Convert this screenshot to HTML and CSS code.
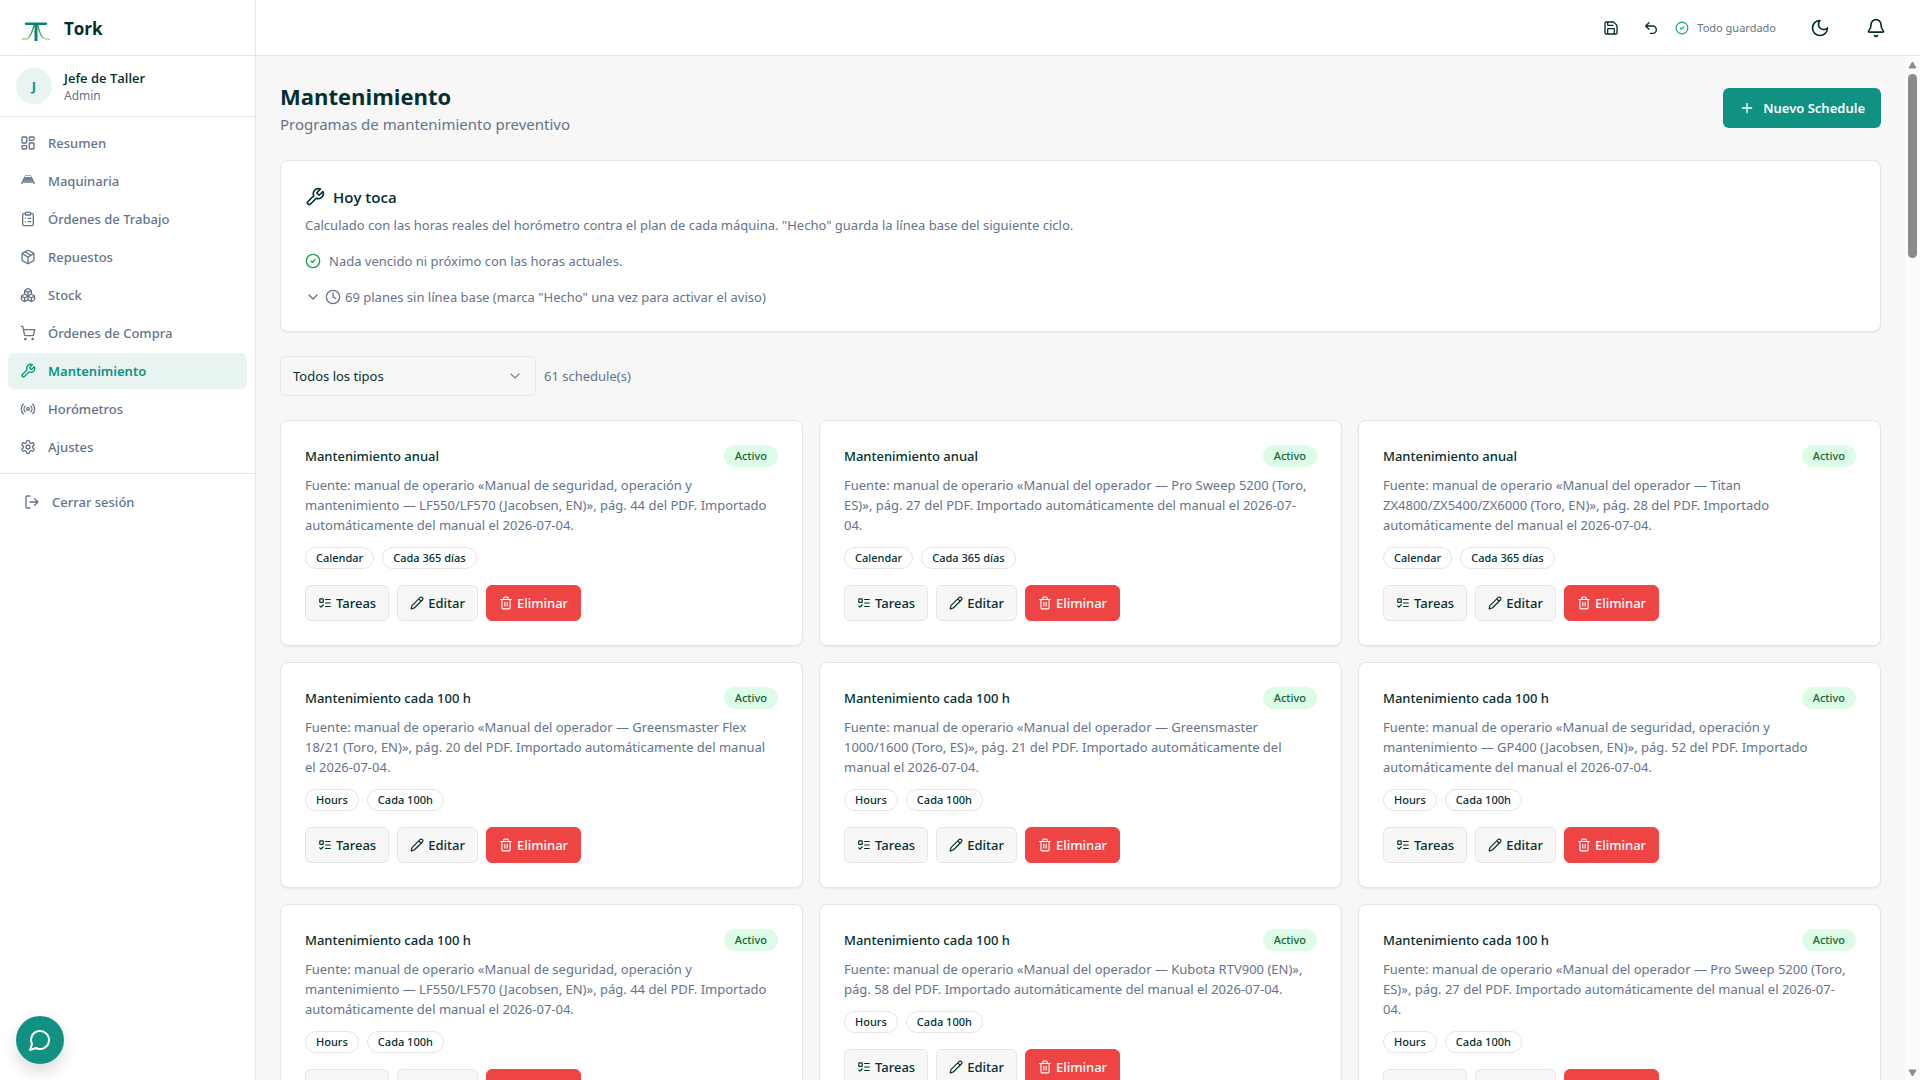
FILE: index.html
```html
<!DOCTYPE html>
<html lang="es">
<head>
<meta charset="utf-8">
<meta name="viewport" content="width=device-width, initial-scale=1">
<title>Tork – Mantenimiento</title>
<link rel="stylesheet" href="styles.css">
</head>
<body>
<svg class="sprite" aria-hidden="true">
  <symbol id="dashboard" viewBox="0 0 24 24"><rect x="3" y="3" width="7" height="9" rx="1"/><rect x="14" y="3" width="7" height="5" rx="1"/><rect x="14" y="12" width="7" height="9" rx="1"/><rect x="3" y="16" width="7" height="5" rx="1"/></symbol>
  <symbol id="machine" viewBox="0 0 16 16"><g stroke="none" fill="currentColor"><path d="M5 2h6v1H5z" opacity=".6"/><path d="M4 3h1v1H4zM11 3h1v1h-1z" opacity=".5"/><path d="M4 4h8v1h1v2H3V5h1z" opacity=".9"/><path d="M2 7h12v2H2z" opacity=".8"/><path d="M1 9h14v2h-2v-1H3v1H1z" opacity=".7"/></g></symbol>
  <symbol id="clipboard" viewBox="0 0 24 24"><rect x="8" y="2" width="8" height="4" rx="1"/><path d="M16 4h2a2 2 0 0 1 2 2v14a2 2 0 0 1-2 2H6a2 2 0 0 1-2-2V6a2 2 0 0 1 2-2h2M12 11h4M12 16h4M8 11h.01M8 16h.01"/></symbol>
  <symbol id="package" viewBox="0 0 24 24"><path d="M11 21.73a2 2 0 0 0 2 0l7-4A2 2 0 0 0 21 16V8a2 2 0 0 0-1-1.73l-7-4a2 2 0 0 0-2 0l-7 4A2 2 0 0 0 3 8v8a2 2 0 0 0 1 1.73zM12 22V12M3.29 7 12 12l8.71-5M7.5 4.27l9 5.15"/></symbol>
  <symbol id="boxes" viewBox="0 0 24 24"><path d="M2.97 12.92A2 2 0 0 0 2 14.63v3.24a2 2 0 0 0 .97 1.71l3 1.8a2 2 0 0 0 2.06 0L12 19v-5.5l-5-3-4.03 2.42ZM7 16.5l-4.74-2.85M7 16.5l5-3M7 16.5v5.17M12 13.5V19l3.97 2.38a2 2 0 0 0 2.06 0l3-1.8a2 2 0 0 0 .97-1.71v-3.24a2 2 0 0 0-.97-1.71L17 10.5l-5 3ZM17 16.5l-5-3M17 16.5l4.74-2.85M17 16.5v5.17M7.97 4.42A2 2 0 0 0 7 6.13v4.37l5 3 5-3V6.13a2 2 0 0 0-.97-1.71l-3-1.8a2 2 0 0 0-2.06 0l-3 1.8ZM12 8 7.26 5.15M12 8l4.74-2.85M12 13.5V8"/></symbol>
  <symbol id="cart" viewBox="0 0 24 24"><circle cx="8" cy="21" r="1"/><circle cx="19" cy="21" r="1"/><path d="M2.05 2.05h2l2.66 12.42a2 2 0 0 0 2 1.58h9.78a2 2 0 0 0 1.95-1.57l1.65-7.43H5.12"/></symbol>
  <symbol id="wrench" viewBox="0 0 24 24"><path d="M14.7 6.3a1 1 0 0 0 0 1.4l1.6 1.6a1 1 0 0 0 1.4 0l3.77-3.77a6 6 0 0 1-7.94 7.94l-6.91 6.91a2.12 2.12 0 0 1-3-3l6.91-6.91a6 6 0 0 1 7.94-7.94l-3.76 3.76z"/></symbol>
  <symbol id="radio" viewBox="0 0 24 24"><path d="M4.9 19.1C1 15.2 1 8.8 4.9 4.9M7.8 16.2c-2.3-2.3-2.3-6.1 0-8.5M16.2 7.8c2.3 2.3 2.3 6.1 0 8.5M19.1 4.9C23 8.8 23 15.1 19.1 19"/><circle cx="12" cy="12" r="2"/></symbol>
  <symbol id="settings" viewBox="0 0 24 24"><path d="M12.22 2h-.44a2 2 0 0 0-2 2v.18a2 2 0 0 1-1 1.73l-.43.25a2 2 0 0 1-2 0l-.15-.08a2 2 0 0 0-2.73.73l-.22.38a2 2 0 0 0 .73 2.73l.15.1a2 2 0 0 1 1 1.72v.51a2 2 0 0 1-1 1.74l-.15.09a2 2 0 0 0-.73 2.73l.22.38a2 2 0 0 0 2.73.73l.15-.08a2 2 0 0 1 2 0l.43.25a2 2 0 0 1 1 1.73V20a2 2 0 0 0 2 2h.44a2 2 0 0 0 2-2v-.18a2 2 0 0 1 1-1.73l.43-.25a2 2 0 0 1 2 0l.15.08a2 2 0 0 0 2.73-.73l.22-.39a2 2 0 0 0-.73-2.73l-.15-.08a2 2 0 0 1-1-1.74v-.5a2 2 0 0 1 1-1.74l.15-.09a2 2 0 0 0 .73-2.73l-.22-.38a2 2 0 0 0-2.73-.73l-.15.08a2 2 0 0 1-2 0l-.43-.25a2 2 0 0 1-1-1.73V4a2 2 0 0 0-2-2z"/><circle cx="12" cy="12" r="3"/></symbol>
  <symbol id="logout" viewBox="0 0 24 24"><path d="m16 17 5-5-5-5M21 12H9M9 21H5a2 2 0 0 1-2-2V5a2 2 0 0 1 2-2h4"/></symbol>
  <symbol id="save" viewBox="0 0 24 24"><path d="M15.2 3a2 2 0 0 1 1.4.6l3.8 3.8a2 2 0 0 1 .6 1.4V19a2 2 0 0 1-2 2H5a2 2 0 0 1-2-2V5a2 2 0 0 1 2-2zM17 21v-7a1 1 0 0 0-1-1H8a1 1 0 0 0-1 1v7M7 3v4a1 1 0 0 0 1 1h7"/></symbol>
  <symbol id="undo" viewBox="0 0 24 24"><path d="M9 14 4 9l5-5M4 9h10.5a5.5 5.5 0 0 1 0 11H11"/></symbol>
  <symbol id="check" viewBox="0 0 24 24"><circle cx="12" cy="12" r="10"/><path d="m9 12 2 2 4-4"/></symbol>
  <symbol id="moon" viewBox="0 0 24 24"><path d="M12 3a6 6 0 0 0 9 9 9 9 0 1 1-9-9Z"/></symbol>
  <symbol id="bell" viewBox="0 0 24 24"><path d="M10.268 21a2 2 0 0 0 3.464 0M3.262 15.326A1 1 0 0 0 4 17h16a1 1 0 0 0 .74-1.673C19.41 13.956 18 12.499 18 8A6 6 0 0 0 6 8c0 4.499-1.411 5.956-2.738 7.326"/></symbol>
  <symbol id="plus" viewBox="0 0 24 24"><path d="M5 12h14M12 5v14"/></symbol>
  <symbol id="chevron" viewBox="0 0 24 24"><path d="m6 9 6 6 6-6"/></symbol>
  <symbol id="clock" viewBox="0 0 24 24"><circle cx="12" cy="12" r="10"/><path d="M12 6v6l4 2"/></symbol>
  <symbol id="todo" viewBox="0 0 24 24"><rect x="3" y="5" width="6" height="6" rx="1"/><path d="m3 17 2 2 4-4M13 6h8M13 12h8M13 18h8"/></symbol>
  <symbol id="pencil" viewBox="0 0 24 24"><path d="M21.174 6.812a1 1 0 0 0-3.986-3.987L3.842 16.174a2 2 0 0 0-.5.83l-1.321 4.352a.5.5 0 0 0 .623.622l4.353-1.32a2 2 0 0 0 .83-.497zM15 5l4 4"/></symbol>
  <symbol id="trash" viewBox="0 0 24 24"><path d="M3 6h18M19 6v14c0 1-1 2-2 2H7c-1 0-2-1-2-2V6M8 6V4c0-1 1-2 2-2h4c1 0 2 1 2 2v2M10 11v6M14 11v6"/></symbol>
  <symbol id="chat" viewBox="0 0 24 24"><path d="M7.9 20A9 9 0 1 0 4 16.1L2 22Z"/></symbol>
</svg>

<div class="app">
  <aside class="sidebar">
    <a class="brand" href="#">
      <svg class="logo" viewBox="0 0 36 36" aria-hidden="true">
        <defs><linearGradient id="leg" gradientUnits="userSpaceOnUse" x1="0" y1="13" x2="0" y2="29"><stop offset="0" stop-color="#12806f"/><stop offset=".55" stop-color="#3f9f78"/><stop offset="1" stop-color="#a5e65a"/></linearGradient></defs>
        <path d="M18.500 13C16 20 14.500 28 10 28H6M21.500 13C23 20 24.500 26 28 27.500C30 28.300 32 28 34 28.500" fill="none" stroke="url(#leg)" stroke-width="1.300"/>
        <path d="M10 12.700H30" stroke="#12806f" stroke-width="2.400" stroke-linecap="round"/>
        <path d="M20 13V30" stroke="#12806f" stroke-width="3"/>
      </svg>
      <span class="brand-name">Tork</span>
    </a>
    <div class="user">
      <span class="avatar">J</span>
      <div class="user-text"><span class="user-name">Jefe de Taller</span><span class="user-role">Admin</span></div>
    </div>
    <nav class="nav">
      <a class="nav-link" href="#"><svg class="icon"><use href="#dashboard"/></svg>Resumen</a>
      <a class="nav-link" href="#"><svg class="icon"><use href="#machine"/></svg>Maquinaria</a>
      <a class="nav-link" href="#"><svg class="icon"><use href="#clipboard"/></svg>Órdenes de Trabajo</a>
      <a class="nav-link" href="#"><svg class="icon"><use href="#package"/></svg>Repuestos</a>
      <a class="nav-link" href="#"><svg class="icon"><use href="#boxes"/></svg>Stock</a>
      <a class="nav-link" href="#"><svg class="icon"><use href="#cart"/></svg>Órdenes de Compra</a>
      <a class="nav-link active" href="#" aria-current="page"><svg class="icon"><use href="#wrench"/></svg>Mantenimiento</a>
      <a class="nav-link" href="#"><svg class="icon"><use href="#radio"/></svg>Horómetros</a>
      <a class="nav-link" href="#"><svg class="icon"><use href="#settings"/></svg>Ajustes</a>
    </nav>
    <div class="session"><button class="logout" type="button"><svg class="icon"><use href="#logout"/></svg>Cerrar sesión</button></div>
  </aside>

  <div class="workspace">
    <header class="topbar">
      <div class="save-state">
        <button class="icon-btn" type="button" aria-label="Guardar"><svg class="icon"><use href="#save"/></svg></button>
        <button class="icon-btn" type="button" aria-label="Deshacer"><svg class="icon"><use href="#undo"/></svg></button>
        <span class="saved"><svg class="icon small"><use href="#check"/></svg>Todo guardado</span>
      </div>
      <button class="icon-btn" type="button" aria-label="Tema oscuro"><svg class="icon large"><use href="#moon"/></svg></button>
      <button class="icon-btn" type="button" aria-label="Avisos"><svg class="icon large"><use href="#bell"/></svg></button>
    </header>

    <div class="viewport">
      <main class="content">
        <div class="page-head">
          <div><h1 class="page-title">Mantenimiento</h1><p class="page-sub">Programas de mantenimiento preventivo</p></div>
          <button class="primary" type="button"><svg class="icon"><use href="#plus"/></svg>Nuevo Schedule</button>
        </div>

        <section class="card today">
          <h2 class="today-title"><svg class="icon large"><use href="#wrench"/></svg>Hoy toca</h2>
          <p class="today-text">Calculado con las horas reales del horómetro contra el plan de cada máquina. "Hecho" guarda la línea base del siguiente ciclo.</p>
          <p class="today-ok"><svg class="icon ok"><use href="#check"/></svg>Nada vencido ni próximo con las horas actuales.</p>
          <button class="today-more" type="button" aria-expanded="false"><svg class="icon"><use href="#chevron"/></svg><svg class="icon"><use href="#clock"/></svg>69 planes sin línea base (marca "Hecho" una vez para activar el aviso)</button>
        </section>

        <div class="filters">
          <div class="select-wrap">
            <select class="select" aria-label="Tipo"><option>Todos los tipos</option><option>Calendar</option><option>Hours</option></select>
            <svg class="icon select-arrow"><use href="#chevron"/></svg>
          </div>
          <span class="count">61 schedule(s)</span>
        </div>

        <div class="grid">
          <article class="card">
            <div class="card-head"><h3 class="card-title">Mantenimiento anual</h3><span class="status">Activo</span></div>
            <p class="card-text">Fuente: manual de operario «Manual de seguridad, operación y mantenimiento — LF550/LF570 (Jacobsen, EN)», pág. 44 del PDF. Importado automáticamente del manual el 2026-07-04.</p>
            <div class="tags"><span class="tag">Calendar</span><span class="tag">Cada 365 días</span></div>
            <div class="actions"><button class="btn" type="button"><svg class="icon small"><use href="#todo"/></svg>Tareas</button><button class="btn" type="button"><svg class="icon small"><use href="#pencil"/></svg>Editar</button><button class="btn danger" type="button"><svg class="icon small"><use href="#trash"/></svg>Eliminar</button></div>
          </article>
          <article class="card">
            <div class="card-head"><h3 class="card-title">Mantenimiento anual</h3><span class="status">Activo</span></div>
            <p class="card-text">Fuente: manual de operario «Manual del operador — Pro Sweep 5200 (Toro, ES)», pág. 27 del PDF. Importado automáticamente del manual el 2026-07-<br>04.</p>
            <div class="tags"><span class="tag">Calendar</span><span class="tag">Cada 365 días</span></div>
            <div class="actions"><button class="btn" type="button"><svg class="icon small"><use href="#todo"/></svg>Tareas</button><button class="btn" type="button"><svg class="icon small"><use href="#pencil"/></svg>Editar</button><button class="btn danger" type="button"><svg class="icon small"><use href="#trash"/></svg>Eliminar</button></div>
          </article>
          <article class="card">
            <div class="card-head"><h3 class="card-title">Mantenimiento anual</h3><span class="status">Activo</span></div>
            <p class="card-text">Fuente: manual de operario «Manual del operador — Titan ZX4800/ZX5400/ZX6000 (Toro, EN)», pág. 28 del PDF. Importado automáticamente del manual el 2026-07-04.</p>
            <div class="tags"><span class="tag">Calendar</span><span class="tag">Cada 365 días</span></div>
            <div class="actions"><button class="btn" type="button"><svg class="icon small"><use href="#todo"/></svg>Tareas</button><button class="btn" type="button"><svg class="icon small"><use href="#pencil"/></svg>Editar</button><button class="btn danger" type="button"><svg class="icon small"><use href="#trash"/></svg>Eliminar</button></div>
          </article>
          <article class="card">
            <div class="card-head"><h3 class="card-title">Mantenimiento cada 100 h</h3><span class="status">Activo</span></div>
            <p class="card-text">Fuente: manual de operario «Manual del operador — Greensmaster Flex 18/21 (Toro, EN)», pág. 20 del PDF. Importado automáticamente del manual el 2026-07-04.</p>
            <div class="tags"><span class="tag">Hours</span><span class="tag">Cada 100h</span></div>
            <div class="actions"><button class="btn" type="button"><svg class="icon small"><use href="#todo"/></svg>Tareas</button><button class="btn" type="button"><svg class="icon small"><use href="#pencil"/></svg>Editar</button><button class="btn danger" type="button"><svg class="icon small"><use href="#trash"/></svg>Eliminar</button></div>
          </article>
          <article class="card">
            <div class="card-head"><h3 class="card-title">Mantenimiento cada 100 h</h3><span class="status">Activo</span></div>
            <p class="card-text">Fuente: manual de operario «Manual del operador — Greensmaster 1000/1600 (Toro, ES)», pág. 21 del PDF. Importado automáticamente del manual el 2026-07-04.</p>
            <div class="tags"><span class="tag">Hours</span><span class="tag">Cada 100h</span></div>
            <div class="actions"><button class="btn" type="button"><svg class="icon small"><use href="#todo"/></svg>Tareas</button><button class="btn" type="button"><svg class="icon small"><use href="#pencil"/></svg>Editar</button><button class="btn danger" type="button"><svg class="icon small"><use href="#trash"/></svg>Eliminar</button></div>
          </article>
          <article class="card">
            <div class="card-head"><h3 class="card-title">Mantenimiento cada 100 h</h3><span class="status">Activo</span></div>
            <p class="card-text">Fuente: manual de operario «Manual de seguridad, operación y mantenimiento — GP400 (Jacobsen, EN)», pág. 52 del PDF. Importado automáticamente del manual el 2026-07-04.</p>
            <div class="tags"><span class="tag">Hours</span><span class="tag">Cada 100h</span></div>
            <div class="actions"><button class="btn" type="button"><svg class="icon small"><use href="#todo"/></svg>Tareas</button><button class="btn" type="button"><svg class="icon small"><use href="#pencil"/></svg>Editar</button><button class="btn danger" type="button"><svg class="icon small"><use href="#trash"/></svg>Eliminar</button></div>
          </article>
          <article class="card">
            <div class="card-head"><h3 class="card-title">Mantenimiento cada 100 h</h3><span class="status">Activo</span></div>
            <p class="card-text">Fuente: manual de operario «Manual de seguridad, operación y mantenimiento — LF550/LF570 (Jacobsen, EN)», pág. 44 del PDF. Importado automáticamente del manual el 2026-07-04.</p>
            <div class="tags"><span class="tag">Hours</span><span class="tag">Cada 100h</span></div>
            <div class="actions"><button class="btn" type="button"><svg class="icon small"><use href="#todo"/></svg>Tareas</button><button class="btn" type="button"><svg class="icon small"><use href="#pencil"/></svg>Editar</button><button class="btn danger" type="button"><svg class="icon small"><use href="#trash"/></svg>Eliminar</button></div>
          </article>
          <article class="card">
            <div class="card-head"><h3 class="card-title">Mantenimiento cada 100 h</h3><span class="status">Activo</span></div>
            <p class="card-text">Fuente: manual de operario «Manual del operador — Kubota RTV900 (EN)», pág. 58 del PDF. Importado automáticamente del manual el 2026-07-04.</p>
            <div class="tags"><span class="tag">Hours</span><span class="tag">Cada 100h</span></div>
            <div class="actions"><button class="btn" type="button"><svg class="icon small"><use href="#todo"/></svg>Tareas</button><button class="btn" type="button"><svg class="icon small"><use href="#pencil"/></svg>Editar</button><button class="btn danger" type="button"><svg class="icon small"><use href="#trash"/></svg>Eliminar</button></div>
          </article>
          <article class="card">
            <div class="card-head"><h3 class="card-title">Mantenimiento cada 100 h</h3><span class="status">Activo</span></div>
            <p class="card-text">Fuente: manual de operario «Manual del operador — Pro Sweep 5200 (Toro, ES)», pág. 27 del PDF. Importado automáticamente del manual el 2026-07-<br>04.</p>
            <div class="tags"><span class="tag">Hours</span><span class="tag">Cada 100h</span></div>
            <div class="actions"><button class="btn" type="button"><svg class="icon small"><use href="#todo"/></svg>Tareas</button><button class="btn" type="button"><svg class="icon small"><use href="#pencil"/></svg>Editar</button><button class="btn danger" type="button"><svg class="icon small"><use href="#trash"/></svg>Eliminar</button></div>
          </article>
        </div>
      </main>
      <div class="scrollbar" aria-hidden="true">
        <svg class="scroll-arrow" viewBox="0 0 9 8"><path d="M4.500 1 8 7H1z"/></svg>
        <div class="scroll-track"><div class="scroll-thumb"></div></div>
        <svg class="scroll-arrow" viewBox="0 0 9 8"><path d="M4.500 7 8 1H1z"/></svg>
      </div>
    </div>
  </div>
</div>
<button class="chat" type="button" aria-label="Abrir chat"><svg class="icon chat-icon"><use href="#chat"/></svg></button>
</body>
</html>
```
FILE: styles.css
```css
:root {
  --text: #042f2e;
  --muted: #64748b;
  --primary: #119182;
  --border: #e5e5e5;
  --surface: #f7f7f7;
  --font: "Noto Sans", "Open Sans", sans-serif;
  --font-heading: "Open Sans", "Noto Sans", sans-serif;
}

* { box-sizing: border-box; }

body {
  margin: 0;
  background: var(--surface);
  color: var(--text);
  font: 400 13px/20px var(--font);
}

h1, h2, h3, p { margin: 0; }
a { color: inherit; text-decoration: none; }
button { margin: 0; border: 0; padding: 0; background: none; color: inherit; font: inherit; cursor: pointer; }

.sprite { display: none; }

.icon {
  flex: none;
  width: 16px;
  height: 16px;
  fill: none;
  stroke: currentColor;
  stroke-width: 2;
  stroke-linecap: round;
  stroke-linejoin: round;
}
.icon.small { width: 14px; height: 14px; }
.icon.large { width: 20px; height: 20px; }
.icon.ok { color: #16a34a; }

.app { display: flex; height: 100vh; }

/* Sidebar */
.sidebar {
  flex: none;
  width: 256px;
  border-right: 1px solid var(--border);
  background: #fff;
}
.brand {
  display: flex;
  align-items: center;
  gap: 12px;
  height: 56px;
  padding: 2px 16px 0;
  border-bottom: 1px solid var(--border);
}
.logo { width: 36px; height: 36px; }
.brand-name { font: 700 17px/24px var(--font-heading); }
.user {
  display: flex;
  align-items: center;
  gap: 12px;
  padding: 12px 16px;
  border-bottom: 1px solid var(--border);
}
.avatar {
  display: grid;
  place-items: center;
  width: 36px;
  height: 36px;
  border-radius: 50%;
  background: #e7f4f2;
  color: var(--primary);
  font: 700 13px/20px var(--font-heading);
}
.user-text { display: flex; flex-direction: column; }
.user-name { font: 600 13px/20px var(--font-heading); }
.user-role { color: var(--muted); font-size: 12px; line-height: 16px; }
.nav {
  display: flex;
  flex-direction: column;
  gap: 2px;
  padding: 8px;
  border-bottom: 1px solid var(--border);
}
.nav-link {
  display: flex;
  align-items: center;
  gap: 12px;
  height: 36px;
  padding: 0 12px;
  border-radius: 6px;
  color: var(--muted);
  font-weight: 500;
}
.nav-link.active { background: #e7f4f2; color: var(--primary); font-weight: 600; }
.session { padding: 12px; }
.logout {
  display: flex;
  align-items: center;
  gap: 12px;
  width: 100%;
  height: 32px;
  padding: 0 12px;
  color: var(--muted);
  font-weight: 500;
}

/* Top bar */
.workspace { display: flex; flex: 1; flex-direction: column; min-width: 0; }
.topbar {
  display: flex;
  flex: none;
  align-items: center;
  justify-content: flex-end;
  gap: 16px;
  height: 56px;
  padding: 0 24px;
  border-bottom: 1px solid var(--border);
  background: #fff;
}
.icon-btn { display: grid; place-items: center; width: 40px; height: 40px; }
.save-state { display: flex; align-items: center; padding-right: 8px; }
.saved { display: flex; align-items: center; gap: 8px; padding-left: 4px; color: var(--muted); font-size: 11px; }
.saved .icon { color: #16a36f; }

/* Page */
.viewport { display: flex; flex: 1; min-height: 0; }
.content {
  display: flex;
  flex: 1;
  flex-direction: column;
  gap: 24px;
  min-width: 0;
  padding: 24px;
  overflow: hidden;
}
.content > * { flex: none; }
.page-head { display: flex; align-items: center; justify-content: space-between; }
.page-title { font: 700 22px/32px var(--font-heading); }
.page-sub { color: var(--muted); font-size: 15px; line-height: 24px; }
.primary {
  display: flex;
  align-items: center;
  gap: 8px;
  height: 40px;
  padding: 0 16px;
  border-radius: 6px;
  background: var(--primary);
  color: #fff;
  font-weight: 600;
}

.card {
  padding: 24px;
  border: 1px solid var(--border);
  border-radius: 8px;
  background: #fff;
  box-shadow: 0 1px 2px rgba(0, 0, 0, .06);
}

.today { display: flex; flex-direction: column; align-items: flex-start; }
.today-title { display: flex; align-items: center; gap: 8px; font: 600 15px/24px var(--font-heading); }
.today-text { margin: 6px 0 16px; color: var(--muted); }
.today-ok { display: flex; align-items: center; gap: 8px; margin-bottom: 16px; color: var(--muted); }
.today-more { display: flex; align-items: center; gap: 4px; color: var(--muted); }

.filters { display: flex; align-items: center; gap: 8px; }
.select-wrap { position: relative; width: 256px; }
.select {
  width: 100%;
  height: 40px;
  padding: 0 36px 0 12px;
  border: 1px solid var(--border);
  border-radius: 6px;
  appearance: none;
  background: var(--surface);
  color: var(--text);
  font: inherit;
}
.select-arrow { position: absolute; top: 12px; right: 13px; opacity: .5; pointer-events: none; }
.count { color: var(--muted); }

.grid {
  display: grid;
  grid-template-columns: repeat(3, minmax(0, 1fr));
  gap: 16px;
}
.card-head { display: flex; align-items: center; justify-content: space-between; margin-bottom: 8px; }
.card-title { font: 500 13px/20px var(--font); }
.status, .tag {
  padding: 2px 10px;
  border: 1px solid var(--border);
  border-radius: 999px;
  font: 500 11px/16px var(--font);
}
.status { border-color: #dcfce7; background: #dcfce7; color: #166534; }
.card-text { color: var(--muted); }
.tags { display: flex; gap: 8px; margin: 12px 0 16px; }
.actions { display: flex; gap: 8px; }
.btn {
  display: flex;
  align-items: center;
  gap: 4px;
  height: 36px;
  padding: 0 12px;
  border: 1px solid var(--border);
  border-radius: 6px;
  background: var(--surface);
  font-weight: 500;
}
.btn.danger { border-color: #ef4444; background: #ef4444; color: #fff; }

/* Scroll bar */
.scrollbar {
  display: flex;
  flex: none;
  flex-direction: column;
  align-items: center;
  gap: 5px;
  width: 15px;
  padding: 5px 0 3px;
  background: #fcfcfc;
}
.scroll-arrow { flex: none; width: 9px; height: 8px; fill: #8b8b8b; stroke: #8b8b8b; stroke-linejoin: round; }
.scroll-track { flex: 1; width: 9px; }
.scroll-thumb { height: 18.6%; border-radius: 5px; background: #8b8b8b; }

/* Floating chat button */
.chat {
  position: fixed;
  bottom: 16px;
  left: 16px;
  display: grid;
  place-items: center;
  width: 48px;
  height: 48px;
  border-radius: 50%;
  background: var(--primary);
  color: #fff;
  box-shadow: 0 8px 16px rgba(0, 0, 0, .14);
}
.chat-icon { width: 24px; height: 24px; }
```
